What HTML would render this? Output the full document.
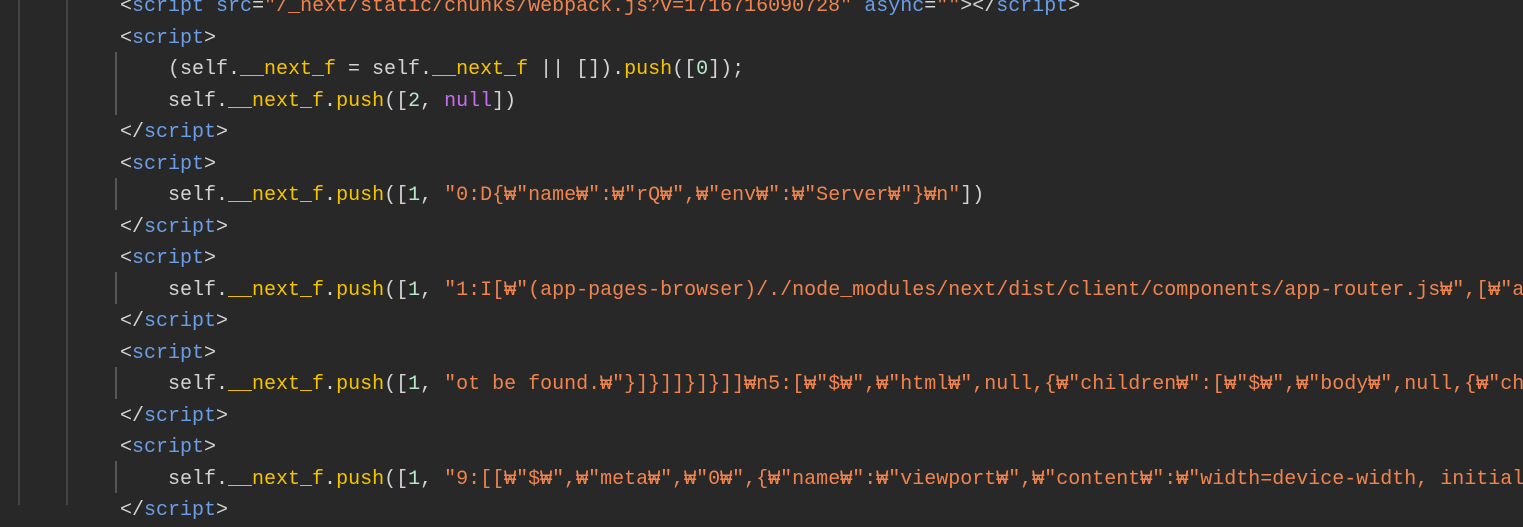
<!DOCTYPE html>
<html><head><meta charset="utf-8"><style>
html,body{margin:0;padding:0;background:#282828;width:1523px;height:505px;overflow:hidden}
.g{position:absolute;top:0;height:505px;width:2px;background:#444}
.c{position:absolute;left:115px;width:2px;background:#555}
pre{position:absolute;left:120px;top:-9px;margin:0;font-family:"Liberation Mono","Noto Sans CJK KR",monospace;font-size:20px;line-height:31.5px;color:#d4d4d4;white-space:pre}
.t{color:#6b9ee6}.s{color:#f0844f}.y{color:#f5c400}.n{color:#b5e8c8}.p{color:#c66ef0}
</style></head><body>
<div class="g" style="left:18px"></div>
<div class="g" style="left:66px"></div>
<div class="c" style="top:52px;height:63px"></div>
<div class="c" style="top:178px;height:32px"></div>
<div class="c" style="top:272px;height:32px"></div>
<div class="c" style="top:367px;height:32px"></div>
<div class="c" style="top:461px;height:32px"></div>
<pre>&lt;<span class="t">script</span> <span class="t">src</span>=<span class="s">"/_next/static/chunks/webpack.js?v=1716716090728"</span> <span class="t">async</span>=<span class="s">""</span>&gt;&lt;/<span class="t">script</span>&gt;
&lt;<span class="t">script</span>&gt;
    (self.<span class="y">__next_f</span> = self.<span class="y">__next_f</span> || []).<span class="y">push</span>([<span class="n">0</span>]);
    self.<span class="y">__next_f</span>.<span class="y">push</span>([<span class="n">2</span>, <span class="p">null</span>])
&lt;/<span class="t">script</span>&gt;
&lt;<span class="t">script</span>&gt;
    self.<span class="y">__next_f</span>.<span class="y">push</span>([<span class="n">1</span>, <span class="s">"0:D{₩"name₩":₩"rQ₩",₩"env₩":₩"Server₩"}₩n"</span>])
&lt;/<span class="t">script</span>&gt;
&lt;<span class="t">script</span>&gt;
    self.<span class="y">__next_f</span>.<span class="y">push</span>([<span class="n">1</span>, <span class="s">"1:I[₩"(app-pages-browser)/./node_modules/next/dist/client/components/app-router.js₩",[₩"app</span>
&lt;/<span class="t">script</span>&gt;
&lt;<span class="t">script</span>&gt;
    self.<span class="y">__next_f</span>.<span class="y">push</span>([<span class="n">1</span>, <span class="s">"ot be found.₩"}]}]]}]}]]₩n5:[₩"$₩",₩"html₩",null,{₩"children₩":[₩"$₩",₩"body₩",null,{₩"chi</span>
&lt;/<span class="t">script</span>&gt;
&lt;<span class="t">script</span>&gt;
    self.<span class="y">__next_f</span>.<span class="y">push</span>([<span class="n">1</span>, <span class="s">"9:[[₩"$₩",₩"meta₩",₩"0₩",{₩"name₩":₩"viewport₩",₩"content₩":₩"width=device-width, initial</span>
&lt;/<span class="t">script</span>&gt;</pre>
</body></html>
